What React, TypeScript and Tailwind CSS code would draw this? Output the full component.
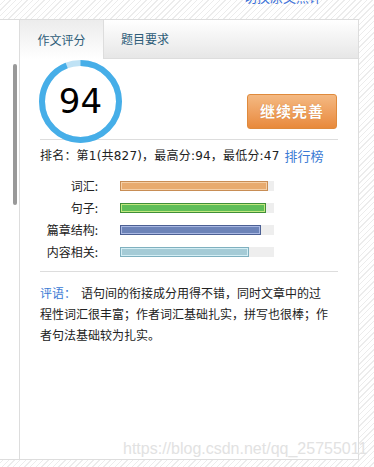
import React from 'react';

const hatch =
  'bg-[repeating-linear-gradient(135deg,#ffffff_0px,#ffffff_3px,#ececec_3px,#ececec_4px)]';

const bars = [
  { label: '词汇:', fill: 'w-[148px] bg-[#e8ab6f] border-[#c88d55] shadow-[inset_0_0_0_1px_#f5cfa6]' },
  { label: '句子:', fill: 'w-[146px] bg-[#5fbe58] border-[#3f8f38] shadow-[inset_0_0_0_1px_#c2e87e]' },
  { label: '篇章结构:', fill: 'w-[141px] bg-[#6c83b8] border-[#4c6094] shadow-[inset_0_0_0_1px_#a9b8e3]' },
  { label: '内容相关:', fill: 'w-[129px] bg-[#a5cbd6] border-[#7fb0bf] shadow-[inset_0_0_0_1px_#d3eef5]' },
];

function ScoreRing({ score }: { score: number }) {
  const r = 38.5;
  const c = 2 * Math.PI * r;
  return (
    <div className="relative z-10 w-[83px] h-[83px]">
      <svg width="83" height="83" viewBox="0 0 83 83">
        <circle cx="41.5" cy="41.5" r={r} fill="none" stroke="#bfe2f5" strokeWidth="6" />
        <circle
          cx="41.5"
          cy="41.5"
          r={r}
          fill="none"
          stroke="#46aee8"
          strokeWidth="6"
          strokeDasharray={`${(score / 100) * c} ${c}`}
          transform="rotate(-90 41.5 41.5)"
        />
      </svg>
      <div className="absolute inset-0 flex items-center justify-center text-[34px] text-black font-['DejaVu_Sans',sans-serif]">
        {score}
      </div>
    </div>
  );
}

export default function App() {
  return (
    <div
      className={`relative w-[374px] h-[467px] overflow-hidden ${hatch} font-['Noto_Sans_CJK_SC','Microsoft_YaHei',sans-serif]`}
    >
      {/* top strip with clipped link */}
      <div className="h-[19px] overflow-hidden flex justify-end pr-[52px]">
        <span className="-mt-[12px] text-[13px] leading-[18px] text-[#3a6fd8]">切换原文点评</span>
      </div>

      <div className="flex w-[359px] h-[441px] border-y border-[#dddddd] bg-white">
        {/* left gutter with scrollbar */}
        <div className="w-[19px] shrink-0 pl-[13px] pt-[44px]">
          <div className="w-[4px] h-[141px] rounded-full bg-[#999999]" />
        </div>

        {/* panel */}
        <div className="w-[340px] border-x border-[#dddddd] flex flex-col">
          <div className="flex h-[39px] bg-gradient-to-b from-[#ffffff] to-[#e6e6e6]">
            <div className="w-[84px] border-r border-[#dddddd] bg-gradient-to-b from-[#ececec] to-[#ffffff] flex items-center justify-center text-[12px] text-[#2d5c78]">
              作文评分
            </div>
            <div className="flex-1 border-b border-[#dddddd] flex items-center pl-[17px] text-[12px] text-[#2d5c78]">
              题目要求
            </div>
          </div>

          <div className="px-[20px]">
            <div className="h-[80px] flex items-start justify-between pt-[1px]">
              <div className="-ml-[1px]">
                <ScoreRing score={94} />
              </div>
              <button className="mt-[34px] mr-[1px] w-[90px] h-[35px] rounded-[3px] border border-[#df8a3c] bg-gradient-to-b from-[#f4b982] to-[#e8893a] text-white text-[15px] font-bold tracking-[1px] [text-shadow:0_0_1px_#c7722a]">
                继续完善
              </button>
            </div>
            <div className="h-px bg-[#dddddd]" />

            <div className="mt-[6px] h-[20px] flex items-center text-[12px] text-[#222222] whitespace-nowrap">
              <span className="font-['DejaVu_Sans','Noto_Sans_CJK_SC',sans-serif] tracking-[0.2px]">
                排名：第1(共827)，最高分:94，最低分:47
              </span>
              <span className="ml-[5px] text-[13px] text-[#3a7ad4]">排行榜</span>
            </div>

            <div className="mt-[9px] flex flex-col">
              {bars.map((b) => (
                <div key={b.label} className="h-[22px] flex items-center">
                  <div className="w-[58px] text-right text-[12px] text-[#222222]">{b.label}</div>
                  <div className="ml-[22px] w-[154px] h-[10px] bg-[#eeeeee] flex">
                    <div className={`h-[10px] border ${b.fill}`} />
                  </div>
                </div>
              ))}
            </div>

            <div className="mt-[8px] h-px bg-[#dddddd]" />

            <p className="mt-[10px] w-[290px] text-[12px] leading-[21px] text-[#222222]">
              <span className="text-[#3a7ad4]">评语：</span>
              <span className="ml-[5px]">
                语句间的衔接成分用得不错，同时文章中的过程性词汇很丰富；作者词汇基础扎实，拼写也很棒；作者句法基础较为扎实。
              </span>
            </p>
          </div>
        </div>
      </div>

      {/* watermark */}
      <div className="absolute left-[123px] top-[437px] text-[16px] text-[#e2e2e2] font-['Liberation_Sans',sans-serif] whitespace-nowrap [text-shadow:0_0_1px_#ffffff]">
        https://blog.csdn.net/qq_25755011
      </div>
    </div>
  );
}
